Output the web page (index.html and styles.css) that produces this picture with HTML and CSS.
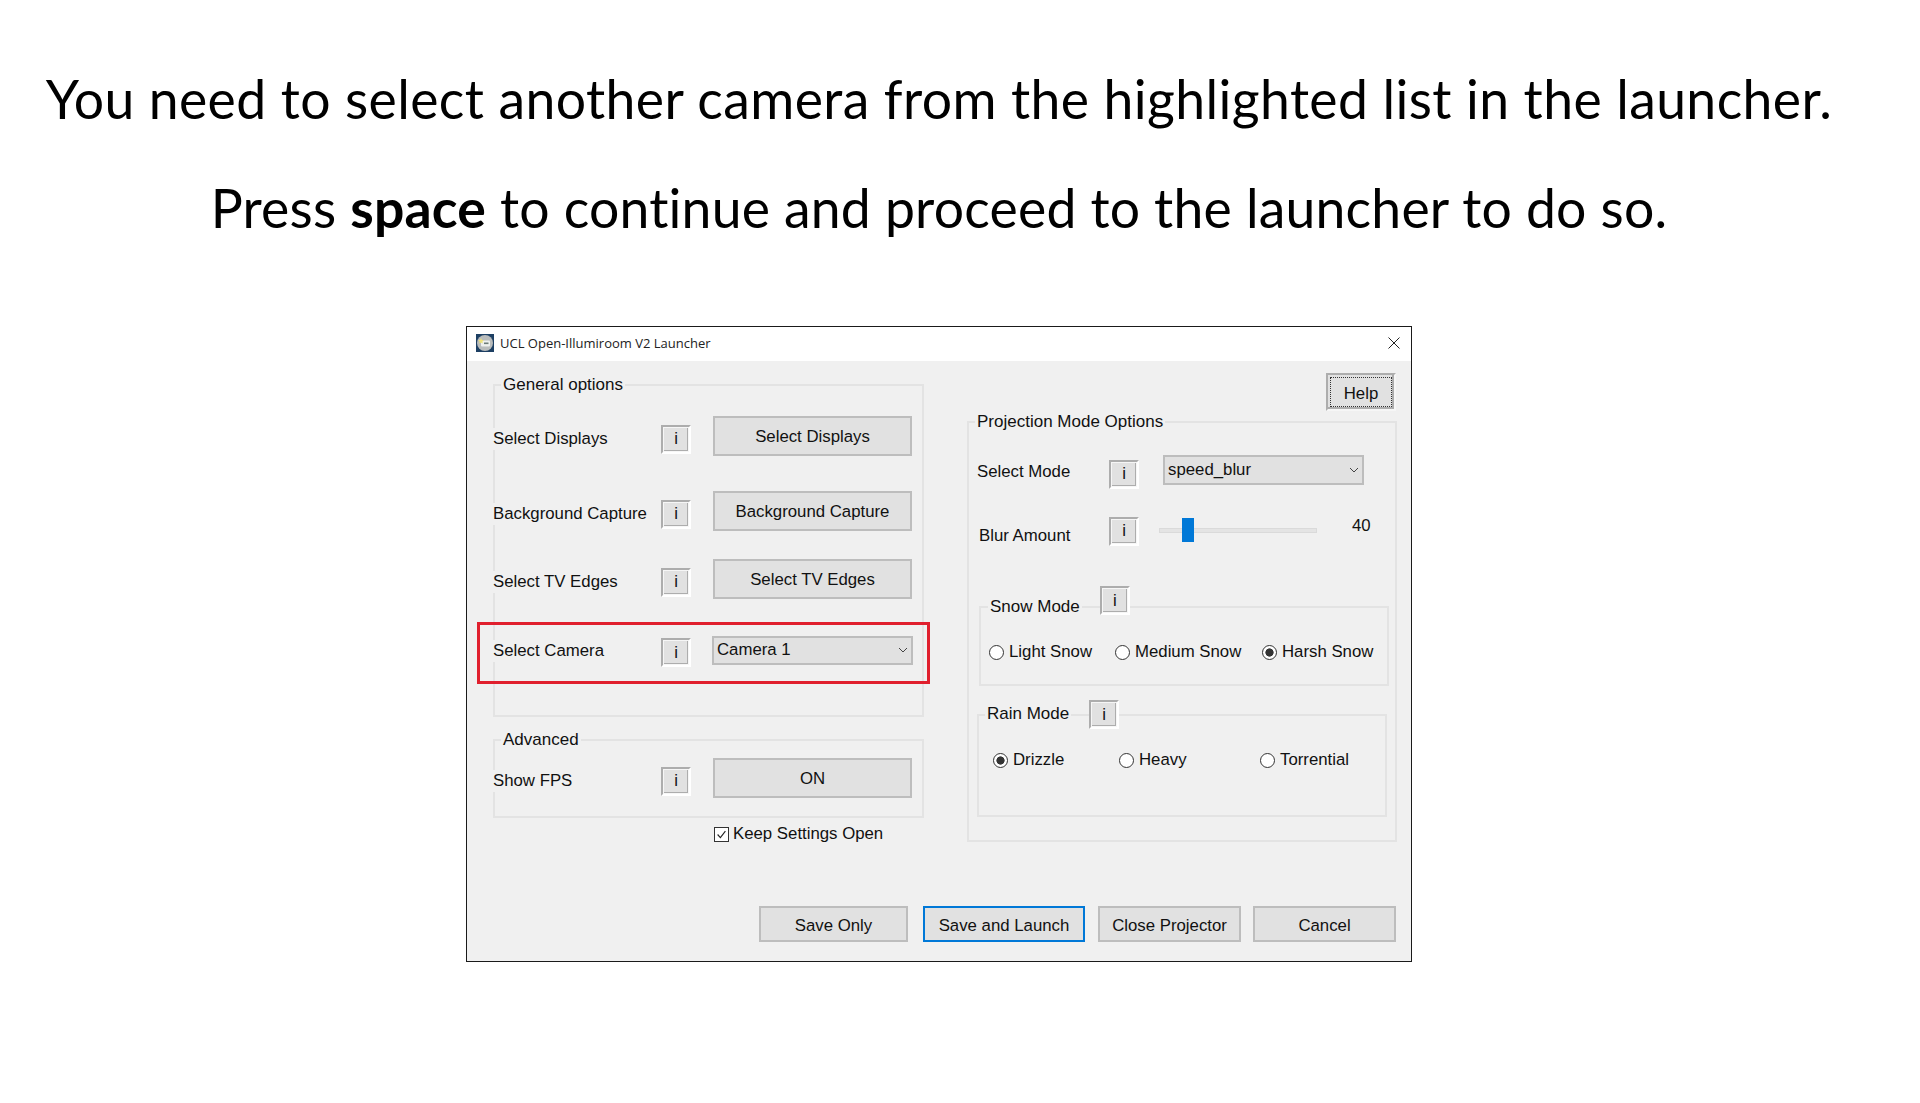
FILE: index.html
```html
<!DOCTYPE html>
<html lang="en">
<head>
<meta charset="utf-8">
<title>UCL Open-Illumiroom V2 Launcher</title>
<link rel="stylesheet" href="styles.css">
</head>
<body>
<main class="page">
  <h1 class="line line-one">You need to select another camera from the highlighted list in the launcher.</h1>
  <p class="line line-two">Press <b>space</b> to continue and proceed to the launcher to do so.</p>

  <section class="window">
    <header class="titlebar">
      <svg class="app-icon" viewBox="0 0 18 18"><rect width="18" height="18" fill="#1d3f63"/><circle cx="9" cy="9" r="8" fill="#b9bcbc"/><rect x="5" y="6.500" width="9" height="6" rx="1" fill="#eef0ee"/><rect x="8" y="8.500" width="4.500" height="1.600" fill="#6d7c78"/><path d="M5 4l.9 1.900 2 .2-1.500 1.300.4 2L5 8.400 3.200 9.400l.4-2L2.100 6.100l2-.2z" fill="#efe27a"/></svg>
      <span class="title">UCL Open-Illumiroom V2 Launcher</span>
      <svg class="close" viewBox="0 0 12 12"><path d="M.5.500l11 11M11.500.500l-11 11" stroke="#222" fill="none"/></svg>
    </header>

    <div class="client">
      <div class="left-col">
        <div class="group group-general">
          <div class="legend"><span class="legend-text">General options</span></div>
          <div class="row row-a"><span class="label">Select Displays</span><button class="info">i</button><button class="btn tall">Select Displays</button></div>
          <div class="row row-b"><span class="label">Background Capture</span><button class="info">i</button><button class="btn tall">Background Capture</button></div>
          <div class="row row-c"><span class="label">Select TV Edges</span><button class="info">i</button><button class="btn tall">Select TV Edges</button></div>
          <div class="row row-d"><span class="label">Select Camera</span><button class="info">i</button>
            <div class="combo combo-wide"><span>Camera 1</span><svg class="chevron" viewBox="0 0 10 6"><path d="M1 1l4 4 4-4" fill="none" stroke="#444"/></svg></div>
          </div>
          <div class="highlight"></div>
        </div>
        <div class="group group-advanced">
          <div class="legend"><span class="legend-text">Advanced</span></div>
          <div class="row row-e"><span class="label">Show FPS</span><button class="info">i</button><button class="btn tall">ON</button></div>
        </div>
        <label class="keep"><span class="checkbox"><svg viewBox="0 0 15 15"><path d="M3 7.500l3.200 3.500L12 3.500" fill="none" stroke="#222" stroke-width="1.300"/></svg></span>Keep Settings Open</label>
      </div>

      <div class="right-col">
        <button class="help"><span>Help</span></button>
        <div class="group group-projection">
          <div class="legend"><span class="legend-text">Projection Mode Options</span></div>
          <div class="mode-row"><span class="mode-label">Select Mode</span><button class="info">i</button>
            <div class="combo combo-mode"><span>speed_blur</span><svg class="chevron" viewBox="0 0 10 6"><path d="M1 1l4 4 4-4" fill="none" stroke="#444"/></svg></div>
          </div>
          <div class="blur-row"><span class="mode-label blur-label">Blur Amount</span><button class="info">i</button>
            <div class="slider"><div class="track"></div><div class="thumb"></div></div>
            <span class="value">40</span>
          </div>
          <div class="group group-snow">
            <div class="legend legend-info"><span class="legend-text">Snow Mode</span><button class="info">i</button></div>
            <div class="radios snow-radios">
              <span class="radio-item snow-1"><i class="radio"></i>Light Snow</span>
              <span class="radio-item snow-2"><i class="radio"></i>Medium Snow</span>
              <span class="radio-item"><i class="radio on"></i>Harsh Snow</span>
            </div>
          </div>
          <div class="group group-rain">
            <div class="legend legend-info"><span class="legend-text">Rain Mode</span><button class="info">i</button></div>
            <div class="radios rain-radios">
              <span class="radio-item rain-1"><i class="radio on"></i>Drizzle</span>
              <span class="radio-item rain-2"><i class="radio"></i>Heavy</span>
              <span class="radio-item"><i class="radio"></i>Torrential</span>
            </div>
          </div>
        </div>
      </div>

      <div class="actions">
        <button class="btn action save-only">Save Only</button>
        <button class="btn action primary">Save and Launch</button>
        <button class="btn action close-proj">Close Projector</button>
        <button class="btn action cancel">Cancel</button>
      </div>
    </div>
  </section>
</main>
</body>
</html>
```

FILE: styles.css
```css
* { box-sizing: border-box; }
html, body { margin: 0; background: #fff; }
.page { width: 1920px; height: 1103px; overflow: hidden; display: flex; flex-direction: column; align-items: center; padding: 63px 42px 0 0; font-family: Lato, sans-serif; color: #000; }
.line { margin: 0; font-size: 53.500px; font-weight: 400; line-height: 70px; white-space: nowrap; text-align: center; font-variant-ligatures: none; }
.line-one { letter-spacing: 0.4px; }
.line-two { margin-top: 39px; letter-spacing: 0.2px; }
.line b { font-weight: 700; }

.window { width: 946px; height: 636px; margin-top: 84px; border: 1px solid #1a1a1a; background: #f0f0f0; display: flex; flex-direction: column; font-family: "Liberation Sans", Arial, sans-serif; font-size: 16.800px; color: #111; }
.titlebar { height: 34px; flex: none; background: #fff; display: flex; align-items: center; padding: 0 11px 2px 9px; }
.app-icon { width: 18px; height: 18px; }
.title { margin-left: 6px; font-family: "Open Sans", sans-serif; font-size: 13px; color: #222; }
.close { width: 12px; height: 12px; margin-left: auto; }

.client { flex: 1; position: relative; display: grid; grid-template-columns: 458px 1fr; grid-template-rows: 1fr auto; padding: 23px 15px 19px 26px; }
.left-col { width: 431px; }
.group { border: 2px solid #e3e3e3; position: relative; }
.legend { position: absolute; top: -12px; left: 6px; line-height: 22px; white-space: nowrap; display: flex; align-items: flex-start; }
.legend-text { padding: 0 2px; background: #f0f0f0; font-size: 17px; }

.group-general { height: 333px; padding-top: 30px; }
.group-advanced { height: 79px; margin-top: 22px; padding-top: 17px; }
.row { display: grid; grid-template-columns: 146px 30px 199px; column-gap: 22px; height: 40px; margin-left: -2px; align-items: center; }
.row-b { margin-top: 35px; }
.row-c { margin-top: 28px; }
.row-d { margin-top: 34px; height: 29px; }
.label { justify-self: start; margin-top: 5px; background: #f0f0f0; line-height: 22px; white-space: nowrap; }
.row-d .label { margin-top: 1px; }

.info { width: 30px; height: 29px; margin: 6px 0 0; padding: 0; font: inherit; color: #111; background: #e1e1e1; border: 2px solid #adadad; border-right-color: #fff; border-bottom-color: #fff; box-shadow: inset 0 0 0 1px #f6f6f6, inset -1px -1px 0 1px #adadad; }
.row-d .info { margin-top: 5px; }

.btn { font: inherit; color: #111; background: #e1e1e1; border: 2px solid #bdbdbd; padding: 2px 0 0; }
.tall { height: 40px; }
.combo { display: flex; align-items: center; justify-content: space-between; background: #e1e1e1; border: 2px solid #bdbdbd; padding: 0 3px; line-height: 22px; }
.combo-wide { width: 201px; height: 29px; margin-left: -1px; }
.combo-mode { width: 201px; height: 30px; }
.chevron { width: 10px; height: 6px; }

.highlight { position: absolute; left: -18px; top: 236px; width: 453px; height: 62px; border: 3px solid #e01f2d; }

.keep { display: flex; align-items: center; margin: 7px 0 0 221px; line-height: 18px; }
.checkbox { width: 15px; height: 15px; margin-right: 4px; background: #fff; border: 1px solid #333; }
.checkbox svg { display: block; width: 13px; height: 13px; }

.right-col { grid-column: 2; position: relative; }
.help { position: absolute; top: -11px; right: 0; width: 70px; height: 38px; padding: 2px; font: inherit; color: #111; background: #e1e1e1; border: 2px solid #adadad; border-right-color: #f6f6f6; border-bottom-color: #f6f6f6; box-shadow: inset -1px -1px 0 1px #adadad; }
.help span { display: flex; align-items: center; justify-content: center; height: 100%; padding-top: 3px; border: 1px dotted #333; }

.group-projection { position: absolute; left: 16px; top: 37px; width: 430px; height: 421px; }
.mode-row { display: flex; align-items: center; margin: 32px 0 0 8px; height: 30px; }
.mode-label { width: 132px; line-height: 22px; flex: none; margin-top: 4px; }
.mode-row .info { margin: 8px 24px 0 0; flex: none; }
.blur-row { display: flex; align-items: center; margin: 30px 0 0 8px; height: 30px; }
.blur-label { padding-left: 2px; margin-top: 12px; }
.blur-row .info { margin: 2px 20px 0 0; flex: none; }
.slider { position: relative; width: 158px; height: 24px; }
.track { position: absolute; left: 0; right: 0; top: 10px; height: 5px; background: #e4e4e4; border: 1px solid #dadada; }
.thumb { position: absolute; left: 23px; top: 0; width: 12px; height: 24px; background: #0078d7; }
.value { margin: -8px 0 0 35px; }

.group-snow { position: absolute; left: 10px; top: 183px; width: 410px; height: 80px; }
.group-rain { position: absolute; left: 8px; top: 291px; width: 410px; height: 103px; }
.legend-info { top: -22px; left: 7px; }
.legend-info .legend-text { margin-top: 10px; }
.legend-info .info { margin: 0 0 0 18px; }
.group-rain .legend-info { top: -16px; left: 6px; }
.group-rain .legend-info .legend-text { margin-top: 3px; }
.radios { display: flex; white-space: nowrap; }
.snow-radios { margin: 33px 0 0 8px; }
.rain-radios { margin: 33px 0 0 14px; }
.radio-item { display: flex; align-items: center; line-height: 22px; }
.radio { width: 15px; height: 15px; margin-right: 5px; border-radius: 50%; border: 1.500px solid #333; background: #fff; flex: none; }
.radio.on { background: radial-gradient(circle, #333 0 3.800px, #fff 4.400px); }
.snow-1 { width: 126px; }
.snow-2 { width: 147px; }
.rain-1 { width: 126px; }
.rain-2 { width: 141px; }

.actions { grid-column: 1 / -1; grid-row: 2; display: flex; justify-content: flex-end; }
.action { height: 36px; margin-left: 15px; padding-top: 3px; }
.save-only { width: 149px; }
.primary { width: 162px; border-color: #0078d7; }
.close-proj { width: 143px; margin-left: 13px; }
.cancel { width: 143px; margin-left: 12px; }
```
